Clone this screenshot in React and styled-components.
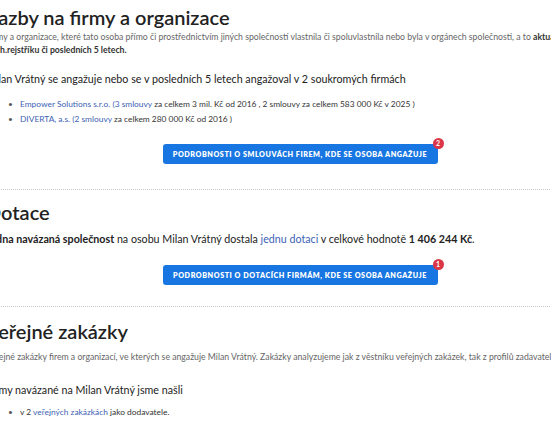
import React from "react";
import styled, { createGlobalStyle } from "styled-components";

const GlobalStyle = createGlobalStyle`
  body {
    margin: 0;
    overflow: hidden;
    background: #fff;
    font-family: "Lato", "Open Sans", sans-serif;
    color: #333;
  }
`;

const Page = styled.div`
  margin-left: -14px;
  width: 628px;
`;

const Section = styled.section`
  display: flex;
  flex-direction: column;
`;

const Nadpis = styled.h2`
  font-size: 20px;
  line-height: 24px;
  font-weight: 600;
  color: #222;
  margin: ${(p) => p.$mt || 0}px 0 0;
`;

const Popis = styled.p`
  font-size: 8.7px;
  line-height: 13px;
  color: #666;
  margin: ${(p) => p.$mt || 0}px 0 0;
  white-space: nowrap;
  b {
    font-weight: 700;
    color: #333;
  }
`;

const Odstavec = styled.p`
  font-size: 10.7px;
  line-height: 16px;
  color: #222;
  margin: ${(p) => p.$mt || 0}px 0 0;
  white-space: nowrap;
  b {
    font-weight: 700;
  }
`;

const Seznam = styled.ul`
  list-style: none;
  padding: 0 0 0 34px;
  margin: ${(p) => p.$mt || 0}px 0 0;
`;

const Polozka = styled.li`
  position: relative;
  font-size: 8.4px;
  line-height: 15px;
  color: #333;
  white-space: nowrap;
  &::before {
    content: "•";
    position: absolute;
    left: -12px;
    color: #555;
  }
`;

const Odkaz = styled.a`
  color: #3d62b4;
  text-decoration: none;
`;

const TlacitkoRadek = styled.div`
  display: flex;
  justify-content: center;
  margin-top: ${(p) => p.$mt || 0}px;
`;

const Tlacitko = styled.button`
  position: relative;
  height: 20px;
  width: 275px;
  padding: 0;
  border: none;
  border-radius: 3px;
  background: #1776e1;
  color: #fff;
  font-family: "Lato", sans-serif;
  font-size: 7.2px;
  font-weight: 800;
  letter-spacing: 0.55px;
  text-transform: uppercase;
  white-space: nowrap;
`;

const Odznak = styled.span`
  position: absolute;
  top: -6px;
  right: -6px;
  width: 11px;
  height: 11px;
  border-radius: 50%;
  background: #dc3545;
  color: #fff;
  font-size: 7px;
  font-weight: 700;
  line-height: 11px;
  text-align: center;
  letter-spacing: 0;
`;

const Oddelovac = styled.hr`
  border: none;
  border-top: 1px dotted #c8c8c8;
  margin: ${(p) => p.$mt || 0}px 0 0;
`;

export default function App() {
  return (
    <>
      <GlobalStyle />
      <Page>
        <Section>
          <Nadpis $mt={5}>Vazby na firmy a organizace</Nadpis>
          <Popis $mt={1}>
            Firmy a organizace, které tato osoba přímo či prostřednictvím jiných společností vlastnila či
            spoluvlastnila nebo byla v orgánech společnosti, a to <b>aktuálně podle</b>
            <br />
            <b>obch.rejstříku či posledních 5 letech.</b>
          </Popis>
          <Odstavec $mt={15}>
            Milan Vrátný se angažuje nebo se v posledních 5 letech angažoval v 2 soukromých firmách
          </Odstavec>
          <Seznam $mt={10}>
            <Polozka>
              <Odkaz href="#">Empower Solutions s.r.o.</Odkaz> <Odkaz href="#">(3 smlouvy</Odkaz> za
              celkem 3 mil. Kč od 2016 , 2 smlouvy za celkem 583 000 Kč v 2025 )
            </Polozka>
            <Polozka>
              <Odkaz href="#">DIVERTA, a.s.</Odkaz> <Odkaz href="#">(2 smlouvy</Odkaz> za celkem 280 000 Kč
              od 2016 )
            </Polozka>
          </Seznam>
          <TlacitkoRadek $mt={17}>
            <Tlacitko>
              Podrobnosti o smlouvách firem, kde se osoba angažuje
              <Odznak>2</Odznak>
            </Tlacitko>
          </TlacitkoRadek>
        </Section>

        <Oddelovac $mt={25} />

        <Section>
          <Nadpis $mt={10}>Dotace</Nadpis>
          <Odstavec $mt={7}>
            <b>Jedna navázaná společnost</b> na osobu Milan Vrátný dostala{" "}
            <Odkaz href="#">jednu dotaci</Odkaz> v celkové hodnotě <b>1 406 244 Kč</b>.
          </Odstavec>
          <TlacitkoRadek $mt={18}>
            <Tlacitko>
              Podrobnosti o dotacích firmám, kde se osoba angažuje
              <Odznak>1</Odznak>
            </Tlacitko>
          </TlacitkoRadek>
        </Section>

        <Oddelovac $mt={21} />

        <Section>
          <Nadpis $mt={12}>Veřejné zakázky</Nadpis>
          <Popis $mt={7}>
            Veřejné zakázky firem a organizací, ve kterých se angažuje Milan Vrátný. Zakázky analyzujeme jak z
            věstníku veřejných zakázek, tak z profilů zadavatelů.
          </Popis>
          <Odstavec $mt={19}>Firmy navázané na Milan Vrátný jsme našli</Odstavec>
          <Seznam $mt={7}>
            <Polozka>
              v 2 <Odkaz href="#">veřejných zakázkách</Odkaz> jako dodavatele.
            </Polozka>
          </Seznam>
        </Section>
      </Page>
    </>
  );
}
